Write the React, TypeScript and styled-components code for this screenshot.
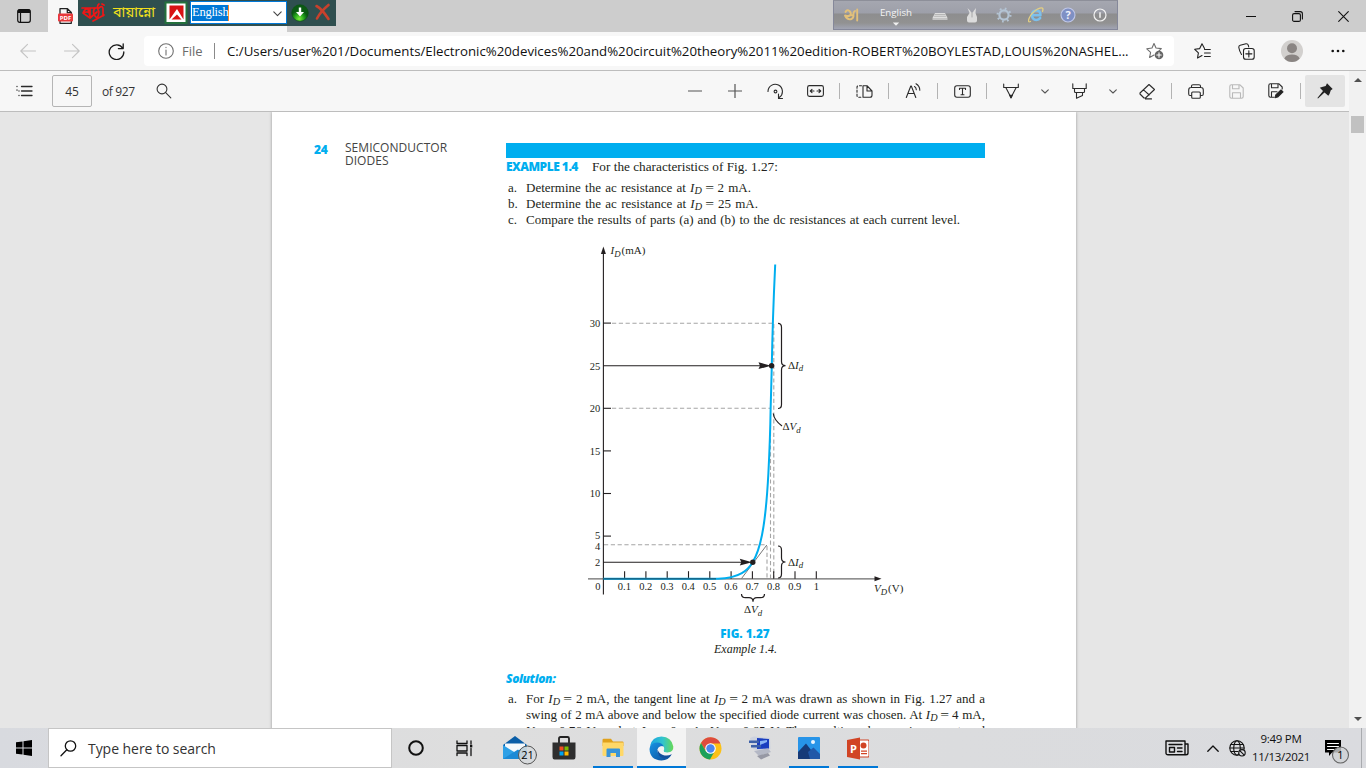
import React from "react";
import styled, { createGlobalStyle } from "styled-components";

const Global = createGlobalStyle`
  * { box-sizing: border-box; }
  html, body { margin: 0; padding: 0; overflow: hidden; }
  body { font-family: "Open Sans", "Noto Sans", sans-serif; color: #1b1b1b; }
  svg { display: block; flex: none; }
`;

const BLUE = "#00aeef";
const INK = "#231f20";

const Screen = styled.div`
  width: 1366px;
  height: 768px;
  display: flex;
  flex-direction: column;
  position: relative;
  overflow: hidden;
  background: #e6e6e6;
`;
const TitleBar = styled.div`
  height: 32px;
  flex: none;
  display: flex;
  background: #cdcdcd;
`;
const TabActions = styled.div`
  width: 48px;
  display: flex;
  align-items: center;
  justify-content: center;
`;
const Tab = styled.div`
  width: 239px;
  height: 32px;
  padding: 7px 0 0 9px;
  background: #f7f7f7;
`;
const WindowButtons = styled.div`
  margin-left: auto;
  display: flex;
`;
const WindowButton = styled.div`
  width: 46px;
  height: 32px;
  display: flex;
  align-items: center;
  justify-content: center;
`;

const NavBar = styled.div`
  height: 39px;
  flex: none;
  display: flex;
  align-items: center;
  padding: 0 6px;
  background: #f7f7f7;
  border-bottom: 1px solid #bdbdbd;
`;
const NavCell = styled.div<{ $w?: number }>`
  width: ${(p) => p.$w ?? 44}px;
  height: 38px;
  flex: none;
  display: flex;
  align-items: center;
  justify-content: center;
`;
const Address = styled.div`
  width: 1030px;
  height: 30px;
  margin: 0 6px;
  flex: none;
  display: flex;
  align-items: center;
  padding: 0 10px 0 14px;
  background: #fff;
  border-radius: 4px;
  white-space: nowrap;
`;
const Scheme = styled.span`
  width: 33px;
  margin-left: 8px;
  font-size: 13px;
  color: #6b6b6b;
  border-right: 1px solid #8a8a8a;
  line-height: 16px;
`;
const Url = styled.span`
  width: 919px;
  margin-left: 12px;
  font-size: 13.25px;
  color: #111;
`;

const Viewer = styled.div`
  height: 657px;
  flex: none;
  display: flex;
`;
const ViewerMain = styled.div`
  width: 1349px;
  display: flex;
  flex-direction: column;
`;
const PdfBar = styled.div`
  height: 41px;
  flex: none;
  display: flex;
  align-items: center;
  padding: 0 4px;
  background: #f7f7f7;
  border-bottom: 1px solid #bdbdbd;
  font-size: 12px;
  color: #333;
`;
const PageInput = styled.div`
  width: 40px;
  height: 32px;
  margin-left: 8px;
  border: 1px solid #b5b5b5;
  border-radius: 2px;
  display: flex;
  align-items: center;
  justify-content: center;
`;
const PageCount = styled.span`
  width: 54px;
  margin-left: 10px;
  letter-spacing: -0.35px;
  white-space: nowrap;
`;
const Tools = styled.div`
  margin-left: auto;
  display: flex;
  align-items: center;
`;
const Tool = styled.div<{ $w?: number; $on?: boolean }>`
  width: ${(p) => p.$w ?? 40}px;
  height: 32px;
  display: flex;
  align-items: center;
  justify-content: center;
  border-radius: 2px;
  background: ${(p) => (p.$on ? "#e4e4e4" : "transparent")};
`;
const Sep = styled.div`
  width: 1px;
  height: 16px;
  margin: 0 4px;
  background: #b3b3b3;
`;
const ScrollTrack = styled.div`
  width: 17px;
  background: #f1f1f1;
  display: flex;
  flex-direction: column;
  align-items: center;
`;
const Thumb = styled.div`
  width: 13px;
  height: 17px;
  margin-top: 36px;
  background: #c1c1c1;
`;
const Triangle = styled.div<{ $down?: boolean }>`
  width: 0;
  height: 0;
  border: 4px solid transparent;
  ${(p) =>
    p.$down
      ? "border-top-color:#505050;border-bottom:0;margin:auto 0 7px;"
      : "border-bottom-color:#505050;border-top:0;margin:7px 0 -2px;"}
`;
const Canvas = styled.div`
  flex: 1;
  overflow: hidden;
  padding-left: 272px;
  background: #e6e6e6;
`;
const Sheet = styled.div`
  width: 804px;
  height: 760px;
  padding: 31px 0 0 42px;
  display: flex;
  background: #fff;
  box-shadow: 0 0 3px rgba(0, 0, 0, 0.35);
  font-family: "Liberation Serif", serif;
  font-size: 13.25px;
  color: ${INK};
`;
const Folio = styled.div`
  width: 31px;
  font: 800 12px/14px "Open Sans", sans-serif;
  letter-spacing: -0.4px;
  color: ${BLUE};
`;
const Running = styled.div`
  width: 161px;
  margin-top: -2px;
  font: 400 12px/13px "Open Sans", sans-serif;
  letter-spacing: 0.03px;
  color: #444;
`;
const Column = styled.div`
  width: 480px;
`;
const Rule = styled.div`
  height: 15px;
  width: 479px;
  background: ${BLUE};
`;
const Heading = styled.div`
  height: 18px;
  line-height: 18px;
  display: flex;
  white-space: nowrap;
`;
const Label = styled.span`
  width: 86px;
  font: 800 12px/18px "Open Sans", sans-serif;
  letter-spacing: -0.5px;
  color: ${BLUE};
`;
const List = styled.div<{ $top: number }>`
  margin-top: ${(p) => p.$top}px;
`;
const Item = styled.div<{ $w: number }>`
  height: 16px;
  font-size: 13px;
  line-height: 16px;
  display: grid;
  grid-template-columns: 18px ${(p) => p.$w}px;
  padding-left: 2px;
  white-space: nowrap;
  & > span:last-child {
    text-align: justify;
    text-align-last: justify;
    white-space: normal;
    height: 16px;
  }
`;
const Sub = styled.span`
  font-size: 10.2px;
  font-style: italic;
  position: relative;
  top: 2px;
  line-height: 1px;
`;
const Eq = styled.span`
  display: inline-block;
  line-height: 12px;
  transform: scaleX(1.2);
`;
const Figure = styled.div`
  margin: 8px 0 6px 74px;
  width: 340px;
  height: 384px;
`;
const FigLabel = styled.div`
  height: 15px;
  width: 478px;
  text-align: center;
  font: 900 11.7px/14px "Open Sans", sans-serif;
  color: ${BLUE};
`;
const FigCaption = styled.div`
  height: 17px;
  width: 479px;
  text-align: center;
  font-size: 12px;
  line-height: 17px;
  font-style: italic;
`;
const Solution = styled.div`
  margin-top: 13px;
  height: 16px;
  font: italic 800 12px/16px "Open Sans", sans-serif;
  letter-spacing: -0.4px;
  color: ${BLUE};
`;

const BijoyBar = styled.div`
  position: absolute;
  left: 78px;
  top: 0;
  width: 258px;
  height: 26px;
  display: flex;
  align-items: flex-start;
  background: #2f4f4f;
`;
const Bengali = styled.span`
  width: 48px;
  height: 26px;
  margin-left: 5px;
  font: 14.3px/27px "Noto Sans Bengali", "Noto Sans", sans-serif;
  color: #f3e01c;
  white-space: nowrap;
`;
const LangSelect = styled.div`
  width: 97px;
  height: 23px;
  margin: 1px 4px 0 2px;
  padding: 3px 4px 0 1px;
  display: flex;
  justify-content: space-between;
  background: #fff;
  border: 1px solid #0078d7;
`;
const Selected = styled.span`
  height: 16px;
  font: 12.5px/15px "Liberation Serif", serif;
  letter-spacing: -0.25px;
  color: #fff;
  background: #0078d7;
  border-right: 1px solid #ff8728;
`;
const Caret = styled.div`
  padding-top: 6px;
`;
const AvroBar = styled.div`
  position: absolute;
  left: 833px;
  top: 0;
  width: 285px;
  height: 30px;
  display: flex;
  background: linear-gradient(#a5a7b0 0, #9d9fa9 12px, #8d8d8e 13px, #929292 22px, #a1a4b3 28px);
  border: 1px solid #85889a;
  border-top-color: #8d8f99;
`;
const AvroCell = styled.div<{ $w?: number }>`
  width: ${(p) => p.$w ?? 32}px;
  flex: none;
  display: flex;
  flex-direction: column;
  align-items: center;
  justify-content: center;
`;
const AvroLabel = styled.span`
  margin-top: 3px;
  height: 15px;
  font-size: 9.7px;
  line-height: 14px;
  color: #f4f4f4;
`;

const Taskbar = styled.div`
  height: 40px;
  flex: none;
  display: flex;
  position: relative;
  background: linear-gradient(90deg, #d8dadf, #dedede 35%, #dbdcde 70%, #dadbdf);
`;
const TaskCell = styled.div<{ $w?: number; $active?: boolean; $open?: boolean }>`
  width: ${(p) => p.$w ?? 49}px;
  height: 40px;
  flex: none;
  display: flex;
  align-items: center;
  justify-content: center;
  background-color: ${(p) => (p.$active ? "#f3f3f3" : "transparent")};
  background-image: ${(p) => (p.$active || p.$open ? "linear-gradient(#0078d7,#0078d7)" : "none")};
  background-repeat: no-repeat;
  background-position: bottom center;
  background-size: ${(p) => (p.$active ? "100%" : "40px")} 2px;
`;
const SearchBox = styled.div`
  width: 344px;
  height: 40px;
  padding-left: 11px;
  display: flex;
  align-items: center;
  gap: 11px;
  background: #fff;
  border: 1px solid #c5c5c5;
  font-size: 14px;
  letter-spacing: -0.05px;
  color: #333;
`;
const Pinned = styled.div`
  display: flex;
  margin-left: 2px;
`;
const Tray = styled.div`
  margin-left: auto;
  display: flex;
`;
const Clock = styled.div`
  width: 64px;
  margin-left: 3px;
  padding-top: 2px;
  text-align: center;
  font-size: 11.5px;
  letter-spacing: -0.3px;
  line-height: 18px;
  white-space: nowrap;
  color: #111;
`;
const DesktopEdge = styled.div`
  width: 5px;
  border-left: 1px solid #a9abaf;
`;

type IconProps = { w?: number; h?: number; c?: string; s?: number; f?: string; children: React.ReactNode };
const Icon = ({ w = 16, h = w, c = "#2b2b2b", s = 1.1, f = "none", children }: IconProps) => (
  <svg width={w} height={h} viewBox={`0 0 ${w} ${h}`} fill={f} stroke={c} strokeWidth={s} strokeLinejoin="round" strokeLinecap="round">
    {children}
  </svg>
);
const Chevron = () => (
  <Icon w={8} h={5} c="#555"><path d="M.7.8 4 4 7.3.8" /></Icon>
);
const ID = () => (
  <>
    <i>I</i>
    <Sub>D</Sub> <Eq>=</Eq>
  </>
);
const VD = () => (
  <>
    <i>V</i>
    <Sub>D</Sub> <Eq>=</Eq>
  </>
);

const yOf = (mA: number) => 578.7 - mA * 8.52;
const xOf = (v: number) => 603.3 + v * 213;

const GraphLabel = ({ x, y, main, sub, rest, delta }: { x: number; y: number; main: string; sub: string; rest?: string; delta?: boolean }) => (
  <text x={x} y={y} fontSize="11">
    {delta && <tspan>Δ</tspan>}
    <tspan fontStyle="italic">{main}</tspan>
    <tspan fontStyle="italic" fontSize="8.8" dy="2.5">{sub}</tspan>
    {rest && <tspan dy="-2.5" dx="1">{rest}</tspan>}
  </text>
);

const Graph = () => (
  <svg width="340" height="384" viewBox="580 236 340 384" fontFamily="Liberation Serif, serif" fill={INK}>
    <g stroke="#a5a5a5" strokeWidth="1.1" fill="none" strokeDasharray="4.2 2.6">
      <path d="M612 323.2H773M612 408.3H771M604 544.8H767" />
      <path d="M773.8 324V578M770.5 425V578M767 546V578" />
    </g>
    <path d="M741.5 578.5 766.8 545" stroke="#777" fill="none" />
    <path d="M588 578.8H876" stroke="#6b6b6b" strokeWidth="1.2" />
    <path d="M881.5 578.8 874.5 576.3V581.3Z" />
    <path d="M603.4 594.5V250" stroke={INK} strokeWidth="1.1" />
    <path d="M603.4 246.5 600.9 254H605.9Z" />
    <g stroke={INK} strokeWidth="1.1">
      {[5, 10, 15, 20, 30].map((v) => <path key={v} d={`M603 ${yOf(v)}h8`} />)}
      {[1, 2, 3, 4, 5, 6, 7, 8, 9, 10].map((v) => <path key={v} d={`M${xOf(v / 10)} 571.2v7.5`} />)}
      <path d="M603 365.7H762M603 562.3H743" />
    </g>
    <path d="M603.5 578.8H718C740 578 748 570 752.7 562.2C757 555 760 545 762 535C766 515 767.5 490 768.4 473C769.6 450 770.3 430 770.6 410L771.8 366C772.5 325 774 290 775.2 264.5" fill="none" stroke={BLUE} strokeWidth="2" />
    <path d="M603.5 578.8H716" stroke="#17688a" strokeWidth="1.4" />
    <path d="M771 365.7 758.5 362.3 760 365.7 758.5 369.1ZM752 562.2 739.8 558.8 741.3 562.2 739.8 565.6Z" />
    <circle cx="771.6" cy="365.7" r="2.7" />
    <circle cx="752.8" cy="562.2" r="2.7" />
    <g stroke={INK} strokeWidth="1.2" fill="none">
      <path d="M778 323.3q3.5 0 3.5 4V361.5q0 4.2 4 4.2q-4 0-4 4.2V404.5q0 4-3.5 4" />
      <path d="M778 546q3.5 0 3.5 4V558q0 4 4 4q-4 0-4 4V574q0 4-3.5 4" />
      <path d="M741.5 594q0 3.7 4 3.7H749q4 0 4 4q0-4 4-4H760.5q4 0 4-3.7" />
      <path d="M773.3 413.5Q774 420 782 426" />
    </g>
    <g fontSize="10.5" textAnchor="end">
      {[2, 4, 5, 10, 15, 20, 25, 30].map((v) => (
        <text key={v} x="600.3" y={yOf(v) + (v === 4 ? 5 : v === 5 ? 2.8 : 3.9)}>{v}</text>
      ))}
      <text x="600.5" y="590.3">0</text>
    </g>
    <g fontSize="10.5" textAnchor="middle">
      {[1, 2, 3, 4, 5, 6, 7, 8, 9].map((v) => <text key={v} x={xOf(v / 10) - 0.2} y="590.3">{`0.${v}`}</text>)}
      <text x="816.3" y="590.3">1</text>
    </g>
    <GraphLabel x={610.5} y={254} main="I" sub="D" rest="(mA)" />
    <GraphLabel x={874} y={592} main="V" sub="D" rest="(V)" />
    <GraphLabel x={788} y={368.7} main="I" sub="d" delta />
    <GraphLabel x={782.5} y={430} main="V" sub="d" delta />
    <GraphLabel x={788} y={565.5} main="I" sub="d" delta />
    <GraphLabel x={744} y={613} main="V" sub="d" delta />
  </svg>
);

const BijoyTools = () => (
  <BijoyBar>
    <Icon w={30} h={26} c="#f01616" s={1.7}>
      <path d="M4 8H21M5 13Q7 8 10 9L12 16M12 8V18L5 13Q9 11 12 13M12 18 19 12M17 8Q14 12 17 16T21 12Q18 6 21 4M21 8Q25 5 25 9T25 16M24 4 26 5M15 21 26 15" />
    </Icon>
    <Bengali>বায়ান্নো</Bengali>
    <Icon w={27} h={26} c="none">
      <rect x="3.5" y="1.5" width="23" height="22.5" fill="#23703c" />
      <rect x="5.5" y="3.5" width="19" height="18.5" fill="#fff" />
      <path d="M8.5 5.5H22.5V19.5L16 9 8.5 19.5Z" fill="#d81313" />
      <path d="M10.5 19.5 16 14.5 20.5 19.5Z" fill="#d81313" />
    </Icon>
    <LangSelect>
      <Selected>English</Selected>
      <Caret><Icon w={9} h={6} c="#444"><path d="M.8.8 4.5 4.6 8.2.8" /></Icon></Caret>
    </LangSelect>
    <svg width="18" height="26" viewBox="0 0 18 26">
      <defs>
        <radialGradient id="greenBall" cx=".45" cy=".85"><stop offset="0" stopColor="#7cf03c" /><stop offset=".6" stopColor="#21a01b" /><stop offset="1" stopColor="#0a5a12" /></radialGradient>
      </defs>
      <circle cx="9" cy="13" r="8.3" fill="url(#greenBall)" stroke="#0a5010" strokeWidth=".6" />
      <path d="M7.8 7.5H10.2V12H13L9 16.5 5 12H7.8Z" fill="#fff" />
    </svg>
    <Icon w={26} h={26} c="#c8412c" s={2.6}>
      <path d="M7.500 6Q13 9 19.500 19M19.500 5Q12 11 8 18.500" />
    </Icon>
  </BijoyBar>
);

const AvroTools = () => (
  <AvroBar>
    <AvroCell $w={34}>
      <Icon w={16} h={14} c="#e2c07a" s={1.9}>
        <path d="M2.500 4Q4 1 6.500 3Q9 5.500 7 7.500Q4.500 8.500 2 7.500Q4.500 12.500 8.500 11Q10.800 9.500 10.500 7L7 7.300M10.500 7Q10 4 12 3M14.200 1.500V12.500" />
      </Icon>
    </AvroCell>
    <AvroCell $w={56}>
      <AvroLabel>English</AvroLabel>
      <Icon w={8} h={6} c="none" f="#f0f0f0"><path d="M.8 1.500H7.200L4 4.800Z" /></Icon>
    </AvroCell>
    <AvroCell>
      <Icon w={16} h={12} c="none"><path d="M3 4H13L15.500 9H.5Z" fill="#dedede" /><path d="M.5 9H15.500V11H.5Z" fill="#c4c4c4" /><path d="M3 5.500H13M2.500 7.300H13.500" stroke="#a5a5a5" strokeWidth=".7" /></Icon>
    </AvroCell>
    <AvroCell>
      <Icon w={12} h={16} c="none"><path d="M1.500 1 4 3.500 5.200 5.500H6.800L8 3.500 10 1 9.500 6 11 10V13.500Q11 15.500 9 15.500H3Q1 15.500 1 13.500V10L3.500 6Z" fill="#dcdcdc" /><path d="M6 6V10" stroke="#999" strokeWidth=".8" /></Icon>
    </AvroCell>
    <AvroCell>
      <Icon w={16} c="#b4c4d4" s={2.2}><circle cx="8" cy="8" r="4.600" /><circle cx="8" cy="8" r="6.400" strokeDasharray="1.700 3.330" strokeLinecap="butt" /></Icon>
    </AvroCell>
    <AvroCell>
      <Icon w={18} c="#7cc0ec" s={2.5}><path d="M5.500 9.200H13.500Q13.500 4.500 9.300 4.500T5 9.500Q5.200 13.700 9.300 13.900Q12 13.900 13.200 12" /><path d="M3.500 15.500Q.5 17 2 12.500Q4.500 6.500 11 2.800Q17.500.2 15.500 5.500" stroke="#e3cf83" strokeWidth="1.300" /></Icon>
    </AvroCell>
    <AvroCell>
      <Icon w={16} c="#c0c8e8" s={1.1}><circle cx="8" cy="8" r="7" fill="#7f90c4" /><text x="8" y="12" fontSize="11" fontWeight="700" fill="#f0f2fb" stroke="none" textAnchor="middle">?</text></Icon>
    </AvroCell>
    <AvroCell>
      <Icon w={14} c="#f2f2f2" s={1.2}><circle cx="7" cy="7" r="6" /><path d="M7 4.800V9.200" strokeWidth="1.500" /></Icon>
    </AvroCell>
  </AvroBar>
);

export default function App() {
  return (
    <>
      <Global />
      <Screen>
        <TitleBar>
          <TabActions>
            <Icon w={14} h={14} c="#111" s={1.2}>
              <rect x=".7" y=".7" width="12.6" height="12.6" rx="2" />
              <path d="M1.5 1H12.5V3.5H1.5ZM3.5 4V13" fill="#111" />
            </Icon>
          </TabActions>
          <Tab>
            <Icon w={17} h={18} c="#222" s={1.3}>
              <path d="M3 7V1.7H10.5L14.3 5.5V7M10.3 1.7V5.7H14.3M3 14V16.3H14.3V14" />
              <rect x="1" y="6.5" width="15" height="8" rx="1" fill="#e8393b" stroke="none" />
              <text x="8.5" y="12.7" fontSize="6" fontWeight="700" fill="#fff" stroke="none" textAnchor="middle" fontFamily="Open Sans, sans-serif">PDF</text>
            </Icon>
          </Tab>
          <WindowButtons>
            <WindowButton><Icon w={10} c="#111"><path d="M0 5.5H10" /></Icon></WindowButton>
            <WindowButton>
              <Icon w={11} c="#111"><rect x=".6" y="2.6" width="7.8" height="7.8" rx="1.5" /><path d="M3 .6H8.3Q10.4.6 10.4 2.7V8" /></Icon>
            </WindowButton>
            <WindowButton><Icon w={11} c="#111"><path d="M.7.7 10.3 10.3M10.3.7.7 10.3" /></Icon></WindowButton>
          </WindowButtons>
        </TitleBar>

        <NavBar>
          <NavCell><Icon c="#c4c4c4"><path d="M15.5 8H.8M7.5 1.3.8 8l6.7 6.7" /></Icon></NavCell>
          <NavCell><Icon c="#c4c4c4"><path d="M.5 8H15.2M8.5 1.3 15.2 8l-6.7 6.7" /></Icon></NavCell>
          <NavCell>
            <Icon w={17} c="#1a1a1a" s={1.3}><path d="M14.8 5.5A7.3 7.3 0 1 0 15.8 8.8M15.2.8V5.6H10.4" /></Icon>
          </NavCell>
          <Address>
            <Icon w={16} c="#707070"><circle cx="8" cy="8" r="7.3" /><path d="M8 7V12M8 4.3V4.6" /></Icon>
            <Scheme>File</Scheme>
            <Url>C:/Users/user%201/Documents/Electronic%20devices%20and%20circuit%20theory%2011%20edition-ROBERT%20BOYLESTAD,LOUIS%20NASHEL...</Url>
            <Icon w={18} c="#6d6d6d">
              <path d="M8 1.5 10 6 15.3 6.6 13 8.8M8 1.5 6 6 .8 6.8 4.6 10.3 3.6 15.5 8 13" />
              <circle cx="13" cy="13" r="4.3" fill="#666" stroke="none" /><path d="M13 10.8V15.2M10.8 13H15.2" stroke="#fff" />
            </Icon>
          </Address>
          <NavCell>
            <Icon w={17} h={16} c="#222">
              <path d="M10.5 5.5 8 .8 5.7 5.6.7 6.3 4.4 9.8 3.5 15 8 12.6M10.5 6.5H16.3M10.5 10H16.3M10.5 13.5H16.3" />
            </Icon>
          </NavCell>
          <NavCell>
            <Icon w={17} h={17} c="#222">
              <path d="M3.5 11.5Q1.5 8.5.8 4.5Q.6 2.6 2.2 2.2L8 .8Q9.8.6 10.4 2.5L10.7 4" />
              <rect x="5.5" y="5.5" width="10.7" height="10.7" rx="2.3" /><path d="M10.85 7.8V13.9M7.8 10.85H13.9" />
            </Icon>
          </NavCell>
          <NavCell $w={48}>
            <Icon w={22} c="none">
              <circle cx="11" cy="11" r="11" fill="#d2d0ce" /><circle cx="11" cy="8.3" r="5" fill="#8a8583" />
              <path d="M3.3 18.5Q5 14.5 11 14.5T18.7 18.5Q15.5 22 11 22T3.3 18.5Z" fill="#8a8583" />
            </Icon>
          </NavCell>
          <NavCell>
            <Icon w={14} h={4} c="none" f="#111"><circle cx="1.7" cy="2" r="1.3" /><circle cx="7" cy="2" r="1.3" /><circle cx="12.3" cy="2" r="1.3" /></Icon>
          </NavCell>
        </NavBar>

        <Viewer>
          <ViewerMain>
            <PdfBar>
              <Tool>
                <Icon w={17} h={12} c="#2b2b2b" s={1.3}><path d="M5.5 1.5H16M5.5 6H16M5.5 10.5H16M1 1.4V1.6M3 6V6.1M3 10.4V10.6M1 5V5.2" /></Icon>
              </Tool>
              <PageInput>45</PageInput>
              <PageCount>of 927</PageCount>
              <Icon w={16} c="#333"><circle cx="6" cy="6" r="4.9" /><path d="M9.7 9.7 14.8 14.8" /></Icon>
              <Tools>
                <Tool><Icon w={14} c="#555" s={1.2}><path d="M0 7H14" /></Icon></Tool>
                <Tool><Icon w={14} c="#555" s={1.2}><path d="M0 7H14M7 0V14" /></Icon></Tool>
                <Tool>
                  <Icon w={17}><path d="M1 8.5A7.2 7.2 0 1 1 12.5 14.3M11.5 11V15.5H15.5" /><circle cx="8.5" cy="8.5" r="1.4" /></Icon>
                </Tool>
                <Tool>
                  <Icon w={17} h={12}><rect x=".6" y=".6" width="15.8" height="10.8" rx="1.8" /><path d="M3.5 6H7M13.5 6H10M5 4.3 3.3 6 5 7.7M12 4.3 13.7 6 12 7.7" /></Icon>
                </Tool>
                <Sep />
                <Tool>
                  <Icon w={17} h={13}><path d="M7 .7V12.3H14Q16 12.3 16 10.3V6L11 .7ZM11 .7V6H16" /><path d="M5.5.7H2.5Q1 .7 1 2.5V10.5Q1 12.3 2.5 12.3H5.5" strokeDasharray="2 2" /></Icon>
                </Tool>
                <Sep />
                <Tool>
                  <Icon w={17} h={16}><path d="M1.3 14.5 5.8 3H6.3L10.8 14.5M2.9 10.5H9.2M9.5 3.5Q11.2 4.5 11.3 6.7M11 .8Q14.8 3 14.8 7.3" /></Icon>
                </Tool>
                <Sep />
                <Tool>
                  <Icon w={17} h={13}><rect x=".7" y=".7" width="15.6" height="11.6" rx="2.2" /><path d="M5.5 4.5V3.3H11.5V4.5M8.5 3.3V9.8M7 9.8H10" /></Icon>
                </Tool>
                <Sep />
                <Tool>
                  <Icon w={16} h={16}><path d="M.7 1V4.5H15.3V1M2.8 4.5 8 14.5 13.2 4.5" /><path d="M6.7 12.3H9.3L8 15Z" fill="#222" /></Icon>
                </Tool>
                <Tool $w={28}><Chevron /></Tool>
                <Tool>
                  <Icon w={15} h={16}><path d="M.8.8V5.5H14.2V.8M2.5 5.5V8.5Q2.5 9.5 3.5 9.5H11.5Q12.5 9.5 12.5 8.5V5.5M4.5 9.5V15.2L10.5 12.5V9.5" /></Icon>
                </Tool>
                <Tool $w={28}><Chevron /></Tool>
                <Tool>
                  <Icon w={17}><path d="M10 1.5 15.5 6.5 6.5 15H5L1 11V10ZM4.5 6.8 10.3 12M6.5 15.9H12.5" /></Icon>
                </Tool>
                <Sep />
                <Tool>
                  <Icon w={16} h={15}><path d="M3.5 3.5V2Q3.5.7 5 .7H11Q12.5.7 12.5 2V3.5M3.5 11.5H2Q.7 11.5.7 10V6Q.7 3.5 3 3.5H13Q15.3 3.5 15.3 6V10Q15.3 11.5 14 11.5H12.5" /><rect x="3.7" y="8" width="8.6" height="6.3" rx="1" /></Icon>
                </Tool>
                <Tool>
                  <Icon w={15} c="#b9b9b9"><path d="M2.5.8H11L14.2 4V12.5Q14.2 14.2 12.5 14.2H2.5Q.8 14.2.8 12.5V2.5Q.8.8 2.5.8ZM3.5.8V4.8H10V.8M3.5 14V8.7H11.5V14" /></Icon>
                </Tool>
                <Tool>
                  <Icon w={16}><path d="M6 14.2H2.5Q.8 14.2.8 12.5V2.5Q.8.8 2.5.8H11L14.2 4V6M3.5.8V4.8H10V.8M3.5 14V8.7H9" /><path d="M7 14.7 7.8 12 13 7 15 8.9 9.7 14Z" fill="#222" /></Icon>
                </Tool>
                <Sep />
                <Tool $on>
                  <Icon w={16} c="none" f="#222"><path d="M10 .3 15.7 6 13.8 7.2 12.5 11 11.3 12.7 7.5 9.5 1 15.5.4 15 6 8 2.8 4.7 5 4 8.7 3Z" /></Icon>
                </Tool>
              </Tools>
            </PdfBar>
            <Canvas>
              <Sheet>
                <Folio>24</Folio>
                <Running>SEMICONDUCTOR<br />DIODES</Running>
                <Column>
                  <Rule />
                  <Heading><Label>EXAMPLE 1.4</Label>For the characteristics of Fig. 1.27:</Heading>
                  <List $top={4}>
                    <Item $w={225}><span>a.</span><span>Determine the ac resistance at <ID /> 2 mA.</span></Item>
                    <Item $w={232}><span>b.</span><span>Determine the ac resistance at <ID /> 25 mA.</span></Item>
                    <Item $w={434}><span>c.</span><span>Compare the results of parts (a) and (b) to the dc resistances at each current level.</span></Item>
                  </List>
                  <Figure><Graph /></Figure>
                  <FigLabel>FIG. 1.27</FigLabel>
                  <FigCaption>Example 1.4.</FigCaption>
                  <Solution>Solution:</Solution>
                  <List $top={4}>
                    <Item $w={459}><span>a.</span><span>For <ID /> 2 mA, the tangent line at <ID /> 2 mA was drawn as shown in Fig. 1.27 and a</span></Item>
                    <Item $w={459}><span /><span>swing of 2 mA above and below the specified diode current was chosen. At <ID /> 4 mA,</span></Item>
                    <Item $w={459}><span /><span><VD /> 0.76 V, and at <ID /> 0 mA, <VD /> 0.65 V. The resulting changes in current and</span></Item>
                  </List>
                </Column>
              </Sheet>
            </Canvas>
          </ViewerMain>
          <ScrollTrack>
            <Triangle />
            <Thumb />
            <Triangle $down />
          </ScrollTrack>
        </Viewer>

        <Taskbar>
          <TaskCell $w={48}>
            <Icon w={16} c="none" f="#000"><path d="M0 2.3 6.5 1.4V7.5H0ZM7.5 1.2 16 0V7.5H7.5ZM0 8.5H6.5V14.6L0 13.7ZM7.5 8.5H16V16L7.5 14.8Z" /></Icon>
          </TaskCell>
          <SearchBox>
            <Icon w={17} c="#111" s={1.3}><circle cx="10.5" cy="6" r="5.2" /><path d="M6.8 9.8 1 15.8" /></Icon>
            Type here to search
          </SearchBox>
          <TaskCell $w={48}><Icon w={16} c="#111" s={2}><circle cx="8" cy="8" r="6.8" /></Icon></TaskCell>
          <TaskCell $w={48}>
            <Icon w={17} c="#111" s={1.3}><path d="M1 1V3.5H11V1M1 15.5V13H11V15.5M15 1V4M15 8.5V15.5" /><rect x="1" y="5.5" width="10" height="5.5" /><rect x="14" y="4.8" width="2.3" height="2.6" fill="#111" stroke="none" /></Icon>
          </TaskCell>
          <Pinned>
            <TaskCell>
              <Icon w={44} h={34} c="none">
                <g transform="translate(8 4)">
                  <path d="M2 10 14 1 26 10V14H2Z" fill="#0a5ea8" /><path d="M4 8.5H24V16L14 20 4 16Z" fill="#f5f9fc" />
                  <path d="M2 10 14 17.5 26 10V24H2Z" fill="#2ea0e6" /><path d="M2 24 17 14.5 26 24Z" fill="#1c8ad6" />
                  <circle cx="26.5" cy="20" r="9" fill="#d6dadc" fillOpacity=".88" stroke="#555" strokeWidth="1" />
                  <text x="26.5" y="24" fontSize="11" fill="#000" textAnchor="middle">21</text>
                </g>
              </Icon>
            </TaskCell>
            <TaskCell>
              <Icon w={24} h={26} c="none">
                <path d="M7 8V3.5Q7 2 8.5 2H15.5Q17 2 17 3.5V8" stroke="#222" strokeWidth="1.8" /><path d="M.5 7.5H23.5V22Q23.5 24.5 21.5 24.5H2.5Q.5 24.5.5 22Z" fill="#2e2e2e" />
                <path d="M7.5 11.5H11.5V15.5H7.5Z" fill="#f25022" /><path d="M12.5 11.5H16.5V15.5H12.5Z" fill="#7fba00" /><path d="M7.5 16.5H11.5V20.5H7.5Z" fill="#00a4ef" /><path d="M12.5 16.5H16.5V20.5H12.5Z" fill="#ffb900" />
              </Icon>
            </TaskCell>
            <TaskCell $open>
              <Icon w={22} h={20} c="none">
                <path d="M.5 3V2Q.5.8 1.7.8H9L11 3.5H20.5Q21.5 3.5 21.5 4.5V8H.5Z" fill="#e0a11b" /><path d="M.5 4.5H21.5V17Q21.5 18 20.5 18H1.5Q.5 18 .5 17Z" fill="#ffd868" />
                <path d="M4.5 19V11.5Q4.5 10.5 5.5 10.5H17Q18 10.5 18 11.5V19H14V15H8.5V19Z" fill="#3893d8" />
              </Icon>
            </TaskCell>
            <TaskCell $active>
              <svg width="25" height="25" viewBox="0 0 25 25">
                <defs>
                  <linearGradient id="edgeTop" x1="0" x2="1"><stop offset="0" stopColor="#1aa3e0" /><stop offset=".55" stopColor="#32c4ce" /><stop offset="1" stopColor="#67d955" /></linearGradient>
                  <linearGradient id="edgeLow" x1="0" y1="0" x2="1" y2="1"><stop offset="0" stopColor="#1794e4" /><stop offset="1" stopColor="#0c4a97" /></linearGradient>
                </defs>
                <path d="M1 10Q3 .8 12.5.5Q22.5.8 24.3 10.5Q24.8 16 18.5 16.5Q14 16.7 14.5 14.3Q15.5 12.5 14.5 10.5Q10 5 1 10Z" fill="url(#edgeTop)" />
                <path d="M.5 13Q1 7 8 6.5Q13 6.5 14.8 10.5Q10 9 8.5 13.5Q8 19 13.5 20.5Q18.5 21.5 22.8 18.3Q19.5 24.5 12.5 24.5Q1 24 .5 13Z" fill="url(#edgeLow)" />
                <path d="M8.5 13.5Q10 9.5 14.5 10.7Q16 13 14.5 14.5Q14.5 16.8 18.5 17Q21.5 17 23.3 16L22.8 18.3Q18 21.3 13.5 20.5Q8.5 19 8.5 13.5Z" fill="#f3f3f3" />
                <path d="M8.5 13Q7.5 20.5 15 22.5Q19.5 22 22.8 18.3Q18 20.5 14 19Q9.5 17.5 8.5 13Z" fill="#124f9c" />
              </svg>
            </TaskCell>
            <TaskCell>
              <Icon w={23} c="none">
                <circle cx="11.5" cy="11.5" r="11" fill="#fbc116" /><path d="M2 6A11 11 0 0 1 21.5 6.5H11.5L7 14Z" fill="#dd4b3e" />
                <path d="M2 6A11 11 0 0 0 11 22.5L15.5 14.5H7Z" fill="#1da05a" />
                <circle cx="11.5" cy="11.5" r="5.3" fill="#fff" /><circle cx="11.5" cy="11.5" r="4.2" fill="#4a86ee" />
              </Icon>
            </TaskCell>
            <TaskCell>
              <Icon w={24} c="none">
                <path d="M2 2 6 .5 22 2 22.5 13 12 15 5 13Z" fill="#ccd2df" /><path d="M9 2 21 3V12.5L9 13Z" fill="#1a3ec0" /><path d="M12 5 19 4V6L12 9Z" fill="#8ab4f4" />
                <path d="M1 4.5H11V7H1ZM3 9H13V11.5H3Z" fill="#3e61a8" /><path d="M6 15 20 12.5 23 16 11 20Z" fill="#b4b8c5" /><path d="M9 20 20 17 22 19.5 13 23.5Z" fill="#9698a4" />
              </Icon>
            </TaskCell>
            <TaskCell $open>
              <Icon w={22} c="none">
                <rect width="22" height="22" rx="1" fill="#2794e8" /><path d="M0 15 8 6.5 20 22H0Z" fill="#163a78" /><path d="M10 15 15.5 10.5 22 17V22H12Z" fill="#2158a8" /><circle cx="15" cy="5" r="2" fill="#e8f4ff" />
              </Icon>
            </TaskCell>
            <TaskCell $open>
              <Icon w={22} h={23} c="none">
                <path d="M12 3H21Q22 3 22 4V19Q22 20 21 20H12Z" fill="#fff" stroke="#cf4526" /><path d="M0 3 13 .5V22.5L0 20Z" fill="#d14424" />
                <circle cx="16.5" cy="8.5" r="3" fill="#d14424" /><path d="M14 13.5H20V14.7H14ZM14 16H20V17.2H14Z" fill="#d14424" />
                <text x="6.5" y="15.5" fontSize="11" fontWeight="700" fill="#fff" textAnchor="middle">P</text>
              </Icon>
            </TaskCell>
          </Pinned>
          <Tray>
            <TaskCell $w={42}>
              <Icon w={24} h={16} c="#111" s={1.4}><path d="M1 1H20V14.8H3Q1 14.8 1 13ZM20 4H23V13Q23 14.8 21 14.8H19M4 4.5H17M12.5 8H17M12.5 11.5H17" /><rect x="4.5" y="7.5" width="5" height="4.5" /></Icon>
            </TaskCell>
            <TaskCell $w={30}><Icon w={12} h={7} c="#111" s={1.3}><path d="M.8 6.3 6 1 11.2 6.3" /></Icon></TaskCell>
            <TaskCell $w={18}>
              <Icon w={17} c="#111"><circle cx="8" cy="8" r="7.2" /><ellipse cx="8" cy="8" rx="3.3" ry="7.2" /><path d="M1 8H15M2 4.5H14M2 11.5H9" /><circle cx="13" cy="12.8" r="3.2" fill="#dadbdf" /><path d="M11 10.8 15 14.8" /></Icon>
            </TaskCell>
            <Clock>9:49 PM<br />11/13/2021</Clock>
            <TaskCell $w={48}>
              <Icon w={26} h={34} c="none">
                <g transform="translate(0 8)">
                  <path d="M1 1H17V13.5H8L5 17V13.5H1Z" fill="#000" /><path d="M3.5 4.5H14.5M3.5 7.5H14.5M3.5 10.5H10" stroke="#fff" strokeWidth="1" />
                  <circle cx="16.500" cy="16" r="8" fill="#d0d2d5" fillOpacity=".8" stroke="#666" /><text x="16.500" y="20" fontSize="11" fill="#000" textAnchor="middle">1</text>
                </g>
              </Icon>
            </TaskCell>
            <DesktopEdge />
          </Tray>
        </Taskbar>

        <BijoyTools />
        <AvroTools />
      </Screen>
    </>
  );
}
